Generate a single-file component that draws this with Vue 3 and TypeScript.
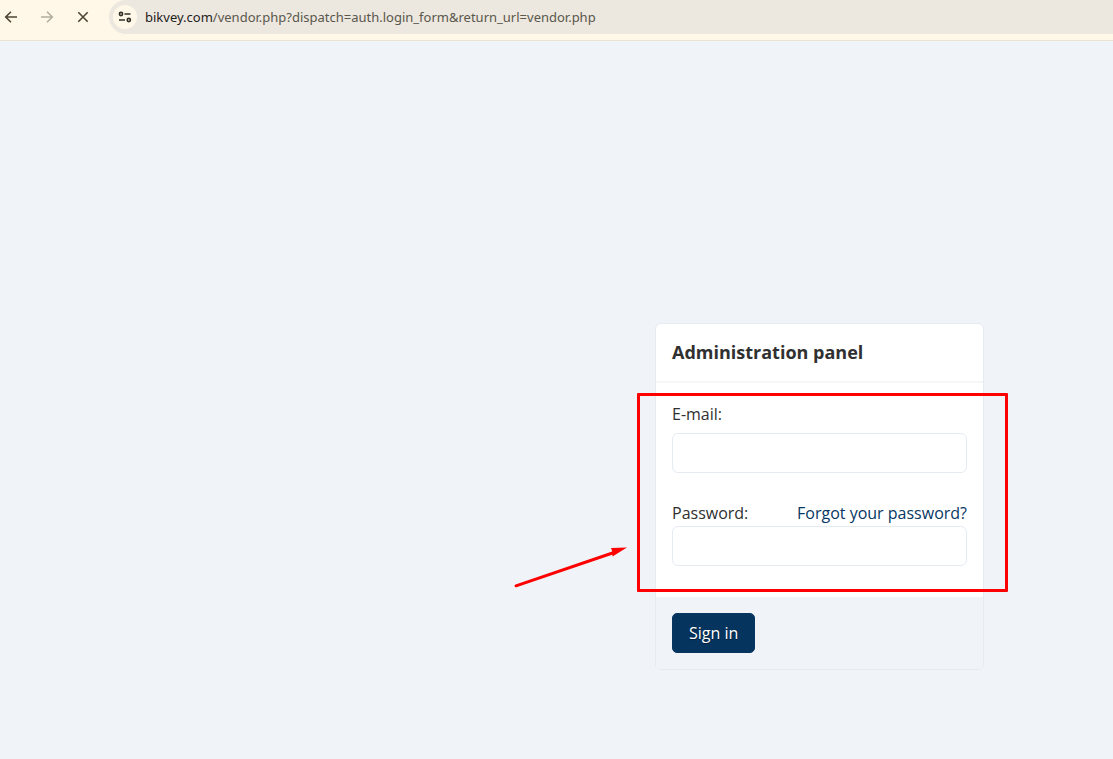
<script setup lang="ts">
import { ref } from 'vue'

const host = 'bikvey.com'
const path = '/vendor.php?dispatch=auth.login_form&return_url=vendor.php'
const email = ref('')
const password = ref('')
</script>

<template>
  <div class="window">
    <header class="toolbar">
      <button class="nav" type="button" aria-label="Back">
        <svg width="14" height="14" viewBox="0 0 14 14"><path d="M13 7H2M7 1.7L1.7 7L7 12.3" /></svg>
      </button>
      <button class="nav faded" type="button" aria-label="Forward">
        <svg width="14" height="14" viewBox="0 0 14 14"><path d="M1 7H12M7 1.7L12.3 7L7 12.3" /></svg>
      </button>
      <button class="nav" type="button" aria-label="Stop loading">
        <svg width="14" height="14" viewBox="0 0 14 14"><path d="M2.3 2.3L11.7 11.7M11.7 2.3L2.3 11.7" /></svg>
      </button>
      <div class="address">
        <button class="site" type="button" aria-label="Site information">
          <svg width="14" height="14" viewBox="0 0 14 14">
            <circle cx="3" cy="4" r="1.6" />
            <path d="M6.5 4H12.5M1 10H7" />
            <circle cx="10.8" cy="10" r="1.6" />
          </svg>
        </button>
        <span class="url"><span class="host">{{ host }}</span>{{ path }}</span>
      </div>
    </header>

    <main class="page">
      <form class="card" @submit.prevent>
        <h1 class="title">Administration panel</h1>
        <div class="fields">
          <div class="row"><label for="email">E-mail:</label></div>
          <input id="email" v-model="email" class="first" type="email" />
          <div class="row">
            <label for="password">Password:</label>
            <a href="#">Forgot your password?</a>
          </div>
          <input id="password" v-model="password" type="password" />
        </div>
        <div class="actions">
          <button class="submit" type="submit">Sign in</button>
        </div>
        <div class="highlight"></div>
        <svg class="arrow" width="114" height="44" viewBox="0 0 114 44">
          <path class="shaft" d="M3 40.8L101 7.5" />
          <path class="head" d="M114 2.500L98 3L99.300 6.500L99.500 11.500Z" />
        </svg>
      </form>
    </main>
  </div>
</template>

<style>
body {
  background: #f0f4f9;
}
</style>

<style scoped>
.window {
  min-height: 100vh;
  display: flex;
  flex-direction: column;
  overflow: hidden;
  background: #f0f4f9;
  color: #303030;
  font-family: "Open Sans", "Noto Sans", sans-serif;
  font-size: 16px;
  line-height: 20px;
}
.toolbar {
  display: flex;
  align-items: center;
  height: 34px;
  padding-bottom: 6px;
  border-bottom: 1px solid #e8e2ce;
  background: #fff8e9;
}
.nav {
  flex: none;
  display: flex;
  justify-content: center;
  width: 36px;
  padding: 0;
  border: 0;
  background: none;
  color: #4b4733;
}
.nav:first-child {
  width: 29px;
  padding-right: 8px;
}
.nav svg,
.site svg {
  fill: none;
  stroke: currentColor;
  stroke-width: 1.6;
}
.nav.faded {
  color: #b3af9d;
}
.address {
  flex: 1;
  display: flex;
  align-items: center;
  gap: 8px;
  height: 34px;
  margin-left: 8px;
  padding-left: 4px;
  border-radius: 17px 0 0 17px;
  background: #ece7df;
}
.site {
  display: grid;
  place-items: center;
  width: 24px;
  height: 24px;
  padding: 0;
  border: 0;
  border-radius: 50%;
  background: #fff8e9;
  color: #302e24;
}
.url {
  color: #5a574c;
  font-family: "Noto Sans", "Open Sans", sans-serif;
  font-size: 13px;
  white-space: nowrap;
}
.host {
  color: #24231c;
}
.page {
  display: flex;
  justify-content: flex-end;
  align-items: flex-start;
  padding: 282px 129px 88px 16px;
}
.card {
  position: relative;
  box-sizing: border-box;
  width: 329px;
  border: 1px solid #e5eaf3;
  border-radius: 6px;
  background: #fff;
}
.title {
  margin: 0;
  padding: 18px 16px 19px;
  border-bottom: 2px solid #f5f6f8;
  font-size: 18px;
  font-weight: 700;
  line-height: 20px;
}
.fields {
  padding: 21px 16px 31px;
}
.row {
  display: flex;
  justify-content: space-between;
}
a {
  color: #083763;
  text-decoration: none;
}
input {
  display: block;
  box-sizing: border-box;
  width: 100%;
  height: 40px;
  margin-top: 3px;
  padding: 0 12px;
  border: 1px solid #e5eaf3;
  border-radius: 6px;
  background: #fff;
  font: inherit;
}
.first {
  margin: 9px 0 30px;
}
.actions {
  padding: 16px;
  border-radius: 0 0 5px 5px;
  background: #f0f4f9;
}
.submit {
  display: block;
  height: 40px;
  padding: 0 16px;
  border: 1px solid #0a3560;
  border-radius: 5px;
  background: #05355f;
  color: #fff;
  font: inherit;
  text-shadow: 0 1px 1px #001a33;
}
.highlight {
  position: absolute;
  top: 69px;
  left: -19px;
  right: -25px;
  bottom: 77px;
  border: 3px solid #f00;
  border-radius: 1px;
  pointer-events: none;
}
.arrow {
  position: absolute;
  top: 221px;
  left: -143px;
  pointer-events: none;
}
.shaft {
  stroke: #f00;
  stroke-width: 3;
  stroke-linecap: round;
}
.head {
  fill: #f00;
}
</style>
